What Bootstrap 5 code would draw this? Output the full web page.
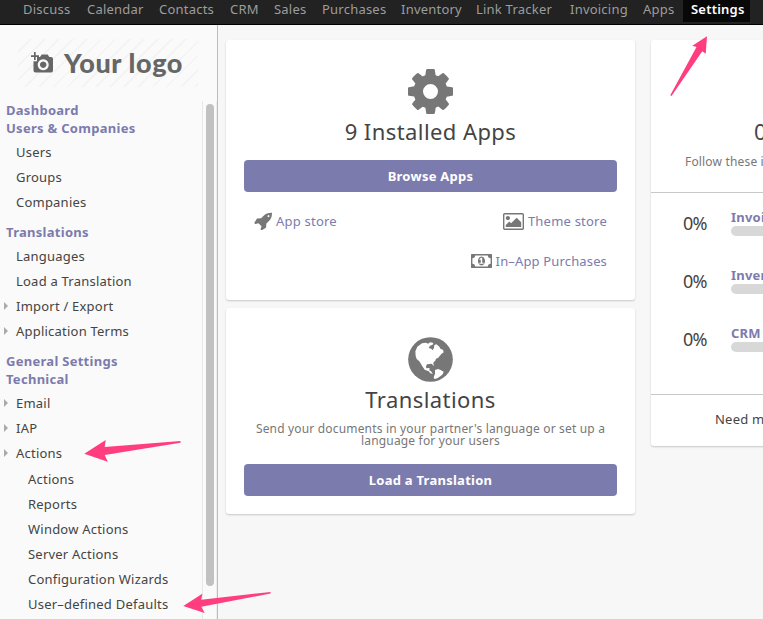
<!DOCTYPE html>
<html lang="en">
<head>
<meta charset="utf-8">
<meta name="viewport" content="width=device-width, initial-scale=1">
<title>Settings</title>
<link href="https://cdn.jsdelivr.net/npm/bootstrap@5.3.0/dist/css/bootstrap.min.css" rel="stylesheet">
<style>
body{font:13px/18px "Noto Sans","Open Sans",sans-serif;letter-spacing:.22px;color:#444;background:#f7f7f7;width:763px;height:619px;overflow:hidden}
a{text-decoration:none;color:#7c7bad}
.topbar{height:25px;background:#222;border-bottom:1px solid #000;padding-left:15px}
.topbar .nav-link{height:22px;padding:0 0 3px 8px;line-height:19px;color:#9d9d9d;white-space:nowrap;flex:none}
.topbar .nav-link.active{background:#080808;color:#fff;font-weight:600}
.side{width:218px;height:594px;background:#fafafa;border-right:1px solid #bcbcbc}
.brand{width:180px;height:48px;margin:14px 0 14px 18px;padding-left:13px;gap:11px;background:repeating-linear-gradient(135deg,#fafafa 0 8px,#f4f4f4 8px 10px);color:#666;font:900 27px/46px Lato,sans-serif;letter-spacing:.6px;white-space:nowrap}
.menu-wrap{height:518px;overflow:hidden}
.menu{padding-left:6px}
.menu h2{font-size:13px;line-height:18px;font-weight:700;color:#7c7bad;margin:0;letter-spacing:.28px}
.menu ul{margin:3px 0 8px;padding:0}
.menu li{line-height:25px;padding-left:10px;list-style:none;position:relative;white-space:nowrap}
.menu ul ul{margin:1px 0 0;padding-left:2px}
.has-sub::before{content:"";position:absolute;left:-2px;top:8px;border:solid transparent;border-width:4px 0 4px 4px;border-left-color:#aaa}
.track{width:15px;border-left:1px solid #e8e8e8;border-right:1px solid #eee;padding:3px 3px 0}
.thumb{width:8px;height:482px;border-radius:4px;background:#c1c1c1}
.board{padding:15px 0 0 8px;gap:16px}
.panel{background:#fff;border-radius:3px;box-shadow:0 1px 2px rgba(0,0,0,.2);width:409px;flex:none}
.panel-inner{padding:8px 18px 0}
.panel h3{font-size:22px;line-height:26px;font-weight:400;letter-spacing:.42px;margin:0;color:#444}
.big{height:32px;background:#7c7bad;border-radius:4px;color:#fff;font-weight:700;line-height:32px;padding:0;font-size:13px;border:0;letter-spacing:.26px}
.panel p{font-size:12px;line-height:12px;color:#777;margin:0;letter-spacing:.17px}
svg{display:block;flex:none;fill:#777}
.step{height:58px;padding-left:32px}
.pct{width:48px;font-size:18px;line-height:24px;letter-spacing:-.8px;padding-top:3px}
.meter{height:10px;border-radius:5px;background:#d8d8d8}
.arrows{position:absolute;left:0;top:0}
.arrows polygon{fill:#ff3d7f}
</style>
<script src="https://cdn.jsdelivr.net/npm/bootstrap@5.3.0/dist/js/bootstrap.bundle.min.js"></script>
</head>
<body>
<nav class="topbar d-flex align-items-start">
<a class="nav-link" style="width:64px" href="#">Discuss</a><a class="nav-link" style="width:72px" href="#">Calendar</a><a class="nav-link" style="width:71px" href="#">Contacts</a><a class="nav-link" style="width:44px" href="#">CRM</a><a class="nav-link" style="width:48px" href="#">Sales</a><a class="nav-link" style="width:79px" href="#">Purchases</a><a class="nav-link" style="width:75px" href="#">Inventory</a><a class="nav-link" style="width:94px" href="#">Link Tracker</a><a class="nav-link" style="width:73px" href="#">Invoicing</a><a class="nav-link" style="width:48px" href="#">Apps</a><a class="nav-link active" style="width:67px" href="#">Settings</a>
</nav>
<div class="d-flex">
<aside class="side flex-shrink-0">
<div class="brand d-flex align-items-center">
<svg width="22" height="22" viewBox="0 0 22 22"><path fill="#666" fill-rule="evenodd" d="M3 0h1.700v3.200H8v1.700H4.700V8H3V4.900H0V3.200h3zM9 5l1.700-2.400h6L18.300 5H20q2 0 2 2v11.500q0 2-2 2H4.500q-2 0-2-2V9.300H6V5zM12.200 7.200a5.500 5.500 0 1 0 .01 0zM12.200 9.500a3.200 3.200 0 1 1-.01 0z"/></svg><span>Your logo</span>
</div>
<div class="menu-wrap d-flex">
<div class="menu flex-grow-1">
<h2>Dashboard</h2>
<h2>Users &amp; Companies</h2>
<ul><li>Users</li><li>Groups</li><li>Companies</li></ul>
<h2>Translations</h2>
<ul><li>Languages</li><li>Load a Translation</li><li class="has-sub">Import / Export</li><li class="has-sub">Application Terms</li></ul>
<h2>General Settings</h2>
<h2>Technical</h2>
<ul><li class="has-sub">Email</li><li class="has-sub">IAP</li><li class="has-sub">Actions
<ul><li>Actions</li><li>Reports</li><li>Window Actions</li><li>Server Actions</li><li>Configuration Wizards</li><li>User–defined Defaults</li></ul></li></ul>
</div>
<div class="track"><div class="thumb"></div></div>
</div>
</aside>
<main class="board d-flex align-items-start flex-grow-1 overflow-hidden">
<div class="d-flex flex-column gap-2">
<section class="panel text-center" style="height:260px">
<div class="panel-inner d-flex flex-column">
<svg class="mx-auto" style="margin-top:21px" width="45" height="45" viewBox="0 128 1536 1536"><path d="M1024 896q0-106-75-181t-181-75-181 75-75 181 75 181 181 75 181-75 75-181zm512-109v222q0 12-8 23t-20 13l-185 28q-19 54-39 91 35 50 107 138 10 12 10 25t-9 23q-27 37-99 108t-94 71q-12 0-26-9l-138-108q-44 23-91 38-16 136-29 186-7 28-36 28h-222q-14 0-24.500-8.500t-11.500-21.500l-28-184q-49-16-90-37l-141 107q-10 9-25 9-14 0-25-11-126-114-165-168-7-10-7-23 0-12 8-23 15-21 51-66.500t54-70.500q-27-50-41-99l-183-27q-13-2-21-12.500t-8-23.500v-222q0-12 8-23t19-13l186-28q14-46 39-92-40-57-107-138-10-12-10-24 0-10 9-23 26-36 98.500-107.500t94.500-71.500q13 0 26 10l138 107q44-23 91-38 16-136 29-186 7-28 36-28h222q14 0 24.500 8.500t11.500 21.500l28 184q49 16 90 37l142-107q9-9 24-9 13 0 25 10 129 119 165 170 7 8 7 22 0 12-8 23-15 21-51 66.500t-54 70.500q26 50 41 98l183 28q13 2 21 12.500t8 23.500z"/></svg>
<h3 style="margin:4px 0 16px">9 Installed Apps</h3>
<a class="btn big" href="#">Browse Apps</a>
<div class="d-flex justify-content-between" style="padding:20px 10px 0">
<a class="d-flex align-items-center" style="gap:4px" href="#"><svg width="18" height="18" viewBox="0 -60 1664 1664"><path d="M1440 320q0-40-28-68t-68-28-68 28-28 68 28 68 68 28 68-28 28-68zm224-288q0 249-75.500 430.500t-253.500 360.500q-81 80-195 176l-20 379q-2 16-16 26l-384 224q-7 4-16 4-12 0-23-9l-64-64q-13-14-8-32l85-276-281-281-276 85q-3 1-9 1-14 0-23-9l-64-64q-17-19-5-39l224-384q10-14 26-16l379-20q96-114 176-195 188-187 358-258t431-71q14 0 24 9.500t10 22.500z"/></svg>App store</a>
<a class="d-flex align-items-center" style="gap:4px" href="#"><svg width="21" height="17" viewBox="0 128 1920 1536"><path d="M640 576q0 80-56 136t-136 56-136-56-56-136 56-136 136-56 136 56 56 136zm1024 384v448h-1408v-192l320-320 160 160 512-512zm96-704h-1600q-13 0-22.500 9.500t-9.500 22.500v1216q0 13 9.500 22.500t22.500 9.500h1600q13 0 22.500-9.500t9.500-22.500v-1216q0-13-9.500-22.500t-22.500-9.500zm160 32v1216q0 66-47 113t-113 47h-1600q-66 0-113-47t-47-113v-1216q0-66 47-113t113-47h1600q66 0 113 47t47 113z"/></svg>Theme store</a>
</div>
<a class="d-flex align-items-center justify-content-end" style="gap:4px;padding:22px 10px 0;letter-spacing:.15px" href="#"><svg width="21" height="14" viewBox="0 256 1920 1280"><path d="M768 1152h384v-96h-128v-448h-114l-148 137 77 80q42-37 55-57h2v288h-128v96zm512-256q0 70-21 142t-59.500 134-101.500 101-138 39-138-39-101.500-101-59.500-134-21-142 21-142 59.500-134 101.500-101 138-39 138 39 101.500 101 59.500 134 21 142zm512 256v-512q-106 0-181-75t-75-181h-1152q0 106-75 181t-181 75v512q106 0 181 75t75 181h1152q0-106 75-181t181-75zm128-832v1152q0 26-19 45t-45 19h-1792q-26 0-45-19t-19-45v-1152q0-26 19-45t45-19h1792q26 0 45 19t19 45z"/></svg>In–App Purchases</a>
</div>
</section>
<section class="panel text-center" style="height:206px">
<div class="panel-inner d-flex flex-column">
<svg class="mx-auto" style="margin-top:21px" width="45" height="45" viewBox="69 80 135 135"><circle cx="136.500" cy="147.500" r="67"/><path fill="#fff" d="M91 123l6-14 14-10 12-2 6 3 7-4 9 2-2 5-8 3-4 7 8 2 4 5 4-8 1-8 6-2 9 7 4 7 7 2 2 8-7 5-5 6-4 5-7 3-2 6-5 4-1 5 2 7-4-3-2-4-7 1-8 1-3 6 1 6 7-1 3 1-1 6 5 3 4 6 1 2-7-2-5-6-12-5-7-10-9-15-8-7-3-9zM150 179l9-3 8 3 9 5-3 8-7 6-9 6-9 2-2-5 4-11z"/></svg>
<h3 style="margin:4px 0 11px">Translations</h3>
<p>Send your documents in your partner's language or set up a language for your users</p>
<a class="btn big" style="margin-top:17px" href="#">Load a Translation</a>
</div>
</section>
</div>
<section class="panel text-nowrap" style="height:406px">
<div style="height:153px;border-bottom:1px solid #c8c8c8;padding:78px 0 0 34px"><h3 style="padding-left:69px;margin-bottom:12px">0</h3><p>Follow these instructions</p></div>
<div style="height:202px;border-bottom:1px solid #c8c8c8;padding-top:15px">
<div class="step d-flex"><div class="pct">0%</div><div class="flex-grow-1"><a class="fw-bold" href="#">Invoicing</a><div class="meter"></div></div></div>
<div class="step d-flex"><div class="pct">0%</div><div class="flex-grow-1"><a class="fw-bold" href="#">Inventory</a><div class="meter"></div></div></div>
<div class="step d-flex"><div class="pct">0%</div><div class="flex-grow-1"><a class="fw-bold" href="#">CRM</a><div class="meter"></div></div></div>
</div>
<div style="padding:15px 0 0 64px">Need more help?</div>
</section>
</main>
</div>
<svg class="arrows" width="763" height="619" viewBox="0 0 763 619" aria-hidden="true">
<polygon points="707,36.300 692.300,45.700 696.500,47 670.300,95.300 671.500,96 702.300,51.300 705.700,53.700"/>
<polygon points="84.300,453.700 105.700,440 104.700,447 180.500,441 180.500,442.700 104.700,455 107.700,461.700"/>
<polygon points="183.300,606 202.300,593.700 201.300,599.700 270.500,592 270.500,593.500 201.300,606.700 204.700,613"/>
</svg>
</body>
</html>
